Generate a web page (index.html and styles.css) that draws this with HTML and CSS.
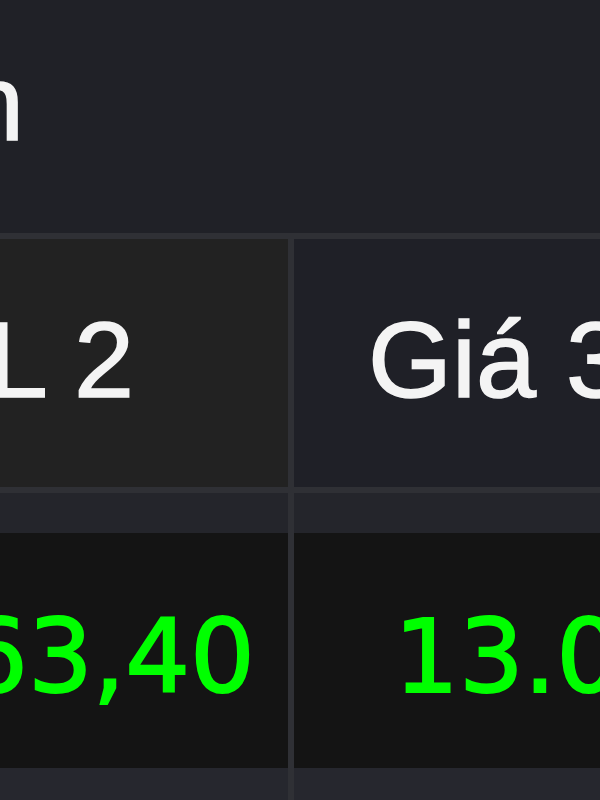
FILE: index.html
```html
<!DOCTYPE html>
<html lang="vi">
<head>
<meta charset="utf-8">
<title>Bảng giá</title>
<link rel="stylesheet" href="styles.css">
</head>
<body>
<div class="board">
  <div class="group-row">
    <div class="group-title"><span>Dư bán</span></div>
  </div>
  <div class="row head">
    <div class="cell c1 h-right">KL 2</div>
    <div class="cell c2 h-left">Giá 3</div>
    <div class="cell c3"></div>
  </div>
  <div class="row spacer">
    <div class="cell c1"></div>
    <div class="cell c2"></div>
    <div class="cell c3"></div>
  </div>
  <div class="row data">
    <div class="cell c1 num">63,40</div>
    <div class="cell c2 num">13.05</div>
    <div class="cell c3"></div>
  </div>
  <div class="row spacer bottom">
    <div class="cell c1"></div>
    <div class="cell c2"></div>
    <div class="cell c3"></div>
  </div>
</div>
</body>
</html>
```
FILE: styles.css
```css
html, body {
  margin: 0;
  padding: 0;
  background: #202127;
  overflow: hidden;
  width: 600px;
  height: 800px;
}
.board {
  display: flex;
  flex-direction: column;
  font-family: "Liberation Sans", Arial, sans-serif;
}
.group-row {
  height: 233px;
  display: flex;
  align-items: center;
  padding-bottom: 28px;
  box-sizing: border-box;
}
.group-title {
  width: 24px;
  display: flex;
  justify-content: flex-end;
  white-space: nowrap;
  font-size: 108px;
  line-height: 108px;
  color: #f4f4f4;
  -webkit-text-stroke: 1.5px #f4f4f4;
}
.row {
  display: flex;
  flex: none;
}
.cell {
  flex: none;
  box-sizing: border-box;
  border-right: 6px solid #2f3035;
  display: flex;
  align-items: center;
  white-space: nowrap;
}
.c1 { width: 294px; }
.c2 { width: 431px; }
.c3 { width: 300px; }
.head {
  height: 248px;
  border-top: 6px solid #2f3035;
  border-bottom: 6px solid #2f3035;
  font-size: 108px;
  line-height: 108px;
  color: #f4f4f4;
  -webkit-text-stroke: 1.5px #f4f4f4;
}
.head .cell { padding-bottom: 6px; }
.head .c1 { background: #222222; }
.head .c2, .head .c3 { background: #1f2027; }
.h-right {
  justify-content: flex-end;
  padding-right: 154px;
}
.h-left {
  justify-content: flex-start;
  padding-left: 74px;
}
.spacer {
  height: 40px;
  background: #24252b;
}
.spacer.bottom {
  height: 60px;
  background: #26272e;
}
.data {
  height: 235px;
  background: #141414;
}
.num {
  font-family: "DejaVu Sans", Verdana, sans-serif;
  font-size: 102px;
  line-height: 102px;
  color: #00ff00;
  -webkit-text-stroke: 2px #00ff00;
  justify-content: flex-end;
  padding-right: 33px;
  padding-top: 12px;
}
```
